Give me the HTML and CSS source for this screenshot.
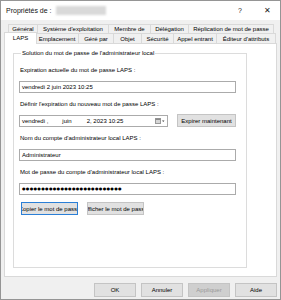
FILE: index.html
```html
<!DOCTYPE html>
<html lang="fr">
<head>
  <meta charset="UTF-8">
  <title>Propriétés</title>
  <link rel="stylesheet" href="styles.css">
</head>
<body>
  <div class="window">
    <div class="titlebar">
      <span class="title">Propriétés de :</span>
      <span class="title-blur"></span>
      <span class="title-space"></span>
      <span class="title-btn help">?</span>
      <span class="title-btn close">✕</span>
    </div>

    <div class="client">
      <div class="tab-row row-back">
        <div class="tab">Général</div>
        <div class="tab">Système d'exploitation</div>
        <div class="tab">Membre de</div>
        <div class="tab">Délégation</div>
        <div class="tab">Réplication de mot de passe</div>
      </div>
      <div class="tab-row row-front">
        <div class="tab active">LAPS</div>
        <div class="tab">Emplacement</div>
        <div class="tab">Géré par</div>
        <div class="tab">Objet</div>
        <div class="tab">Sécurité</div>
        <div class="tab">Appel entrant</div>
        <div class="tab">Éditeur d'attributs</div>
      </div>

      <div class="panel">
        <fieldset class="group">
          <legend>Solution du mot de passe de l'administrateur local</legend>

          <label class="field-label">Expiration actuelle du mot de passe LAPS :</label>
          <div class="textbox">vendredi 2 juin 2023 10:25</div>

          <label class="field-label">Définir l'expiration du nouveau mot de passe LAPS :</label>
          <div class="date-row">
            <div class="textbox datebox">
              <span class="d-day">vendredi ,</span>
              <span class="d-month">juin</span>
              <span class="d-rest">2, 2023 10:25</span>
              <span class="d-space"></span>
              <svg class="d-icon" width="10" height="7" viewBox="0 0 10 7">
                <rect x="0.5" y="0.5" width="5" height="5" fill="#d6d6d6" stroke="#9a9a9a"/>
                <rect x="0.5" y="0.5" width="5" height="1.5" fill="#8a8a8a"/>
                <path d="M7 2.5 L9.5 2.5 L8.25 4 Z" fill="#444"/>
              </svg>
            </div>
            <div class="button expire">Expirer maintenant</div>
          </div>

          <label class="field-label">Nom du compte d'administrateur local LAPS :</label>
          <div class="textbox">Administrateur</div>

          <label class="field-label">Mot de passe du compte d'administrateur local LAPS :</label>
          <div class="textbox password">●●●●●●●●●●●●●●●●●●●●●●●●●●</div>

          <div class="action-row">
            <div class="button focused"><span>Copier le mot de passe</span></div>
            <div class="button"><span>Afficher le mot de passe</span></div>
          </div>
        </fieldset>
      </div>

      <div class="footer">
        <div class="button dlg">OK</div>
        <div class="button dlg">Annuler</div>
        <div class="button dlg disabled">Appliquer</div>
        <div class="button dlg">Aide</div>
      </div>
    </div>
  </div>
</body>
</html>
```

FILE: styles.css
```css
body {
  margin: 0;
  font-family: 'Liberation Sans', Arial, sans-serif;
  font-size: 6px;
  color: #000;
  background: #fff;
}
.window {
  width: 281px;
  height: 300px;
  box-sizing: border-box;
  border: 1px solid #959595;
  background: #f0f0f0;
}
.titlebar {
  height: 19px;
  display: flex;
  align-items: center;
  background: #fff;
}
.title {
  font-size: 7px;
  padding-left: 5px;
  color: #111;
}
.title-blur {
  width: 50px;
  height: 9px;
  margin-left: 4px;
  background: #d9d9d9;
  filter: blur(1px);
}
.title-space {
  flex: 1;
}
.title-btn {
  width: 28px;
  text-align: center;
  font-size: 7px;
  color: #222;
}
.title-btn.close {
  width: 26px;
  font-size: 8px;
}
.client {
  padding-top: 4px;
}
.tab-row {
  display: grid;
  height: 9px;
  line-height: 9px;
}
.row-back {
  margin-left: 7px;
  grid-template-columns: 29px 71px 42px 38px 86px;
}
.row-front {
  margin-left: 5px;
  height: 10px;
  line-height: 10px;
  grid-template-columns: 29px 43px 35px 28px 32px 43px 60px;
}
.tab {
  border: 1px solid #d9d9d9;
  border-right: none;
  border-bottom: none;
  text-align: center;
  white-space: nowrap;
  overflow: hidden;
  background: #f0f0f0;
}
.tab:last-child {
  border-right: 1px solid #d9d9d9;
}
.tab.active {
  position: relative;
  z-index: 1;
  margin: -1px -2px -1px -2px;
  border-right: 1px solid #d9d9d9;
  background: #fff;
  line-height: 11px;
}
.panel {
  margin-left: 3px;
  width: 273px;
  height: 234px;
  box-sizing: border-box;
  border: 1px solid #d9d9d9;
  background: #fff;
}
.group {
  margin: 5px 0 0 8px;
  padding: 9px 0 0 5px;
  width: 234px;
  height: 219px;
  box-sizing: border-box;
  border: 1px solid #dcdcdc;
  min-inline-size: 0;
}
.group legend {
  padding: 0 1px;
  margin-left: 2px;
  line-height: 8px;
}
.field-label {
  display: block;
  line-height: 8px;
  padding-left: 1px;
  margin-bottom: 7px;
}
.textbox {
  width: 217px;
  height: 12px;
  box-sizing: border-box;
  border: 1px solid #ababab;
  padding-left: 2px;
  line-height: 10px;
  margin-bottom: 7px;
  white-space: nowrap;
  overflow: hidden;
}
.date-row {
  display: flex;
  align-items: flex-start;
}
.datebox {
  width: 149px;
  display: flex;
  align-items: center;
}
.d-month {
  margin-left: 14px;
}
.d-rest {
  margin-left: 15px;
}
.d-space {
  flex: 1;
}
.d-icon {
  margin-right: 2px;
}
.button {
  height: 13px;
  box-sizing: border-box;
  border: 1px solid #c4c4c4;
  background: #e1e1e1;
  display: flex;
  align-items: center;
  justify-content: center;
  white-space: nowrap;
  overflow: hidden;
}
.button.expire {
  width: 59px;
  margin: -1px 0 0 9px;
}
.password {
  font-family: 'DejaVu Sans', sans-serif;
  font-size: 4px;
  letter-spacing: 0.35px;
  color: #000;
}
.action-row {
  display: flex;
  gap: 9px;
  margin: 5px 0 0 2px;
}
.action-row .button {
  width: 57px;
}
.button.focused {
  border-color: #2b7fd6;
}
.footer {
  display: flex;
  justify-content: flex-end;
  gap: 5px;
  margin-top: 6px;
  padding-right: 3px;
}
.button.dlg {
  width: 42px;
  height: 14px;
}
.button.disabled {
  background: #cfcfcf;
  border-color: #c4c4c4;
  color: #9a9a9a;
}
```
